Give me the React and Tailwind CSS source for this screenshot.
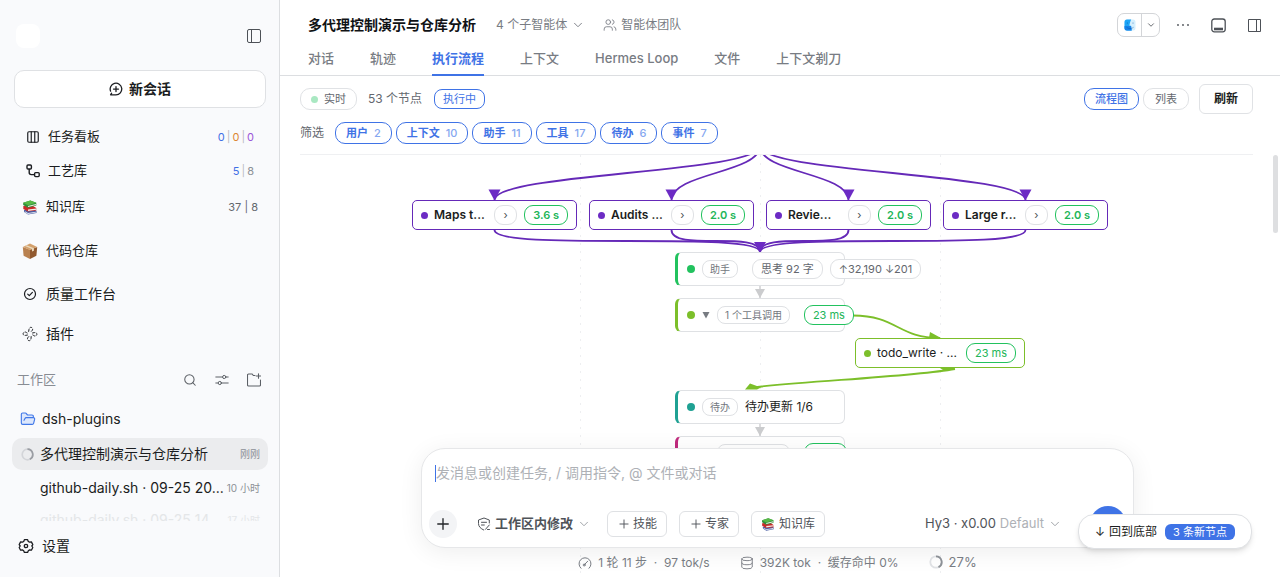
import React from "react";
import { ChevronDown, Search, Users, Database, Columns3, Plus, FolderOpen } from "lucide-react";

function Books({ className }) {
  return (
    <svg className={className} viewBox="0 0 16 16" aria-hidden="true">
      <path d="M2 11l9-1.2 3.5 2.2v2L6 15.6 2.2 13z" fill="#4b5fa5" />
      <path d="M3 12.2l3 1.8 8-1.3v.9L6 14.9l-3-1.7z" fill="#e8e8ee" />
      <path d="M1.3 7l9-.6 4 2.6v2.6l-8.3 1L1.3 10z" fill="#c92a2a" />
      <path d="M6 10.4l8.5-1v1.3L6 11.9z" fill="#f1efe9" />
      <path d="M1.2 3.8L8.3 1.4l6 2.4v2.8L6 8.8 1.2 6z" fill="#2f8f3a" />
      <path d="M1.2 3.8L8.3 1.4l6 2.4L6 6.3z" fill="#58b947" />
      <path d="M6 6.9l8-2v1L6 8.1z" fill="#f3f1ea" />
    </svg>
  );
}

function Box({ className }) {
  return (
    <svg className={className} viewBox="0 0 16 16" aria-hidden="true">
      <path d="M.8 4L8 6.800V16L1.600 12.700z" fill="#b98150" />
      <path d="M15.200 4L8 6.800V16l6.400-3.300z" fill="#91592f" />
      <path d="M.8 4L8 .6 15.200 4 8 7z" fill="#d3a06c" />
      <path d="M4.600 2.200l7.300 3.100v2.500l-1.900.8V6L2.900 3z" fill="#ead9bd" />
    </svg>
  );
}

function NewChatIcon() {
  return (
    <svg className="size-3.5" viewBox="0 0 14 14" fill="none" stroke="currentColor" strokeWidth="1.3" strokeLinecap="round" aria-hidden="true">
      <path d="M1.600 12.800h5.400A5.800 5.800 0 1 0 1.600 9.200M1.600 12.800l1-1.600M7 4.600v5M4.500 7.100h5" />
    </svg>
  );
}

function SidebarIcon() {
  return (
    <svg className="size-3.5" viewBox="0 0 14 14" fill="none" stroke="currentColor" strokeWidth="1" aria-hidden="true">
      <rect x=".5" y=".5" width="13" height="13" rx="1.5" />
      <path d="M4.500 .5v13" />
    </svg>
  );
}

function FlowIcon() {
  return (
    <svg className="size-3.5" viewBox="0 0 14 14" fill="none" stroke="currentColor" strokeWidth="1.4" aria-hidden="true">
      <rect x="1" y="1" width="4.400" height="4" rx="1" />
      <rect x="8.600" y="8.600" width="4.600" height="4" rx="1" />
      <path d="M3.200 5v3.600c0 1.400.6 2 2 2h3.400" />
    </svg>
  );
}

function CheckIcon() {
  return (
    <svg className="size-3.5" viewBox="0 0 14 14" fill="none" stroke="currentColor" strokeWidth="1.2" strokeLinecap="round" strokeLinejoin="round" aria-hidden="true">
      <circle cx="7" cy="7" r="5.500" />
      <path d="M4.700 7.100l1.600 1.600 3.100-3.300" />
    </svg>
  );
}

function PluginIcon() {
  return (
    <svg className="size-4" viewBox="0 0 16 16" fill="none" stroke="currentColor" strokeWidth="1" strokeDasharray="3 1" aria-hidden="true">
      <path d="M6.600 5.800L7 3.300C7.300 1.600 8.800.8 9.900 1.700c1.100.9 1 2.200 0 3.100L8.800 5.900M10.200 7l2.500-.4c1.600-.2 2.600 1 2 2.300-.6 1.200-2.100 1.500-3.200.5L10.200 8.600M9.200 10.200L9 12.700c-.2 1.700-1.600 2.500-2.800 1.600-1.100-.9-1-2.200 0-3.100L7.300 10M5.800 9L3.300 9.400c-1.600.2-2.600-1-2-2.300.6-1.200 2.100-1.500 3.200-.5L5.900 7.400" />
    </svg>
  );
}

function GearIcon() {
  return (
    <svg className="size-4" viewBox="0 0 16 16" fill="none" stroke="currentColor" strokeWidth="1.3" strokeLinejoin="round" aria-hidden="true">
      <path d="M6.400 1.700h3.200l.7 1.700 1.300.8 1.800-.3 1.400 2.700-1 1.400 1 1.500-1.400 2.700-1.800-.3-1.300.8-.7 1.700H6.400l-.7-1.700-1.300-.8-1.800.3-1.400-2.700 1-1.500-1-1.400 1.400-2.700 1.800.3 1.300-.8z" />
      <circle cx="8" cy="8" r="1.700" />
    </svg>
  );
}

function SlidersIcon() {
  return (
    <svg className="size-3.5" viewBox="0 0 14 14" fill="none" stroke="currentColor" strokeWidth="1" strokeLinecap="round" aria-hidden="true">
      <path d="M.8 4h6.700M11 4h2.200M.8 10H3M6.500 10h6.700" />
      <circle cx="9.200" cy="4" r="1.600" />
      <circle cx="4.800" cy="10" r="1.600" />
    </svg>
  );
}

function FolderAddIcon() {
  return (
    <svg className="size-3.5" viewBox="0 0 14 14" fill="none" stroke="currentColor" strokeWidth="1.1" strokeLinecap="round" strokeLinejoin="round" aria-hidden="true">
      <path d="M8 2.500H6.300L5.200 1H1.500a1 1 0 0 0-1 1v10a1 1 0 0 0 1 1h11a1 1 0 0 0 1-1V7M11.500.800v4.400M9.300 3h4.400" />
    </svg>
  );
}

function Ring({ className, base, arc }) {
  return (
    <svg className={className} viewBox="0 0 14 14" fill="none" strokeWidth="1.8" aria-hidden="true">
      <circle cx="7" cy="7" r="5.700" stroke={base} />
      <path d="M7 1.300A5.700 5.700 0 0 1 9.500 12.100" stroke={arc} />
    </svg>
  );
}

function ShieldIcon() {
  return (
    <svg className="size-3.5" viewBox="0 0 14 14" fill="none" stroke="currentColor" strokeWidth="1" strokeLinecap="round" strokeLinejoin="round" aria-hidden="true">
      <path d="M12.300 6V3L7 1 1.500 3v3.500c0 3 2 5 5.200 6.500M4.500 5.300h5M4.500 8h2.800M8.500 12.300l3.800-4.300M10.500 12.500h2" />
    </svg>
  );
}

function GaugeIcon() {
  return (
    <svg className="size-3.5" viewBox="0 0 14 14" fill="none" stroke="currentColor" strokeWidth="1" strokeLinecap="round" aria-hidden="true">
      <path d="M3 12.300a6 6 0 1 1 8 0M6.300 8.800l3.400-3.600" />
      <circle cx="6.200" cy="9" r="1" />
    </svg>
  );
}

function FinderIcon() {
  return (
    <svg className="size-3" viewBox="0 0 12 12" aria-hidden="true">
      <rect x=".5" y=".5" width="11" height="11" rx="2.500" fill="#d5effd" />
      <path d="M3 .5h4.200C6 3 5.500 5 5.500 6.800H7c0 1.700.2 3.200.7 4.700H3A2.500 2.500 0 0 1 .5 9V3A2.500 2.500 0 0 1 3 .5z" fill="#1ba4f6" />
      <path d="M.5 7h5.200l1.500.3.500 4.200H3A2.500 2.500 0 0 1 .5 9z" fill="#1481e8" />
      <path d="M2.600 8.300c2 1.700 5 1.700 7 0" fill="none" stroke="#0d4f9e" strokeWidth=".4" />
      <path d="M3.400 3.500v1.200M9 3.500v1.200" stroke="#0d4f9e" strokeWidth=".5" />
    </svg>
  );
}

function NavRow({ icon, label, children, className }) {
  return (
    <a href="#" className={"flex items-center " + className}>
      {icon}
      <span className="flex-1">{label}</span>
      {children}
    </a>
  );
}

function Sidebar() {
  return (
    <aside className="flex w-[280px] shrink-0 flex-col bg-[#f9fafc] text-[#1b1d21] shadow-[inset_-1px_0_#dcdee1]">
      <div className="flex items-center justify-between pt-6 pr-[19px] pl-4">
        <div className="size-6 rounded-lg bg-white" />
        <button aria-label="收起侧栏" className="text-[#4d5157]"><SidebarIcon /></button>
      </div>
      <button className="mx-3.5 mt-[22px] flex h-[38px] shrink-0 items-center justify-center gap-1.5 rounded-[10px] border border-[#dfe1e4] bg-white text-sm font-semibold">
        <NewChatIcon />
        新会话
      </button>
      <nav className="flex flex-col pt-3 text-[13px]">
        <NavRow className="h-[34px] gap-2 pr-[26px] pl-[26px]" icon={<Columns3 className="size-3.5" strokeWidth={2} />} label="任务看板">
          <span className="flex gap-0.5 text-[11px] text-[#b9bcc2]">
            <span className="text-[#3f6fe5]">0</span>|<span className="text-[#dd8632]">0</span>|<span className="text-[#9a55d8]">0</span>
          </span>
        </NavRow>
        <NavRow className="h-[34px] gap-2 pr-[26px] pl-[26px]" icon={<FlowIcon />} label="工艺库">
          <span className="flex gap-0.5 text-[11px] text-[#b9bcc2]">
            <span className="text-[#3f6fe5]">5</span>|<span className="text-[#8c9096]">8</span>
          </span>
        </NavRow>
        <NavRow className="mb-1 h-[38px] gap-2 pr-[22px] pl-[22px]" icon={<Books className="size-4" />} label="知识库">
          <span className="text-[11px] text-[#63676e]">37 | 8</span>
        </NavRow>
        <NavRow className="mb-px h-[42px] gap-2 pl-[22px]" icon={<Box className="size-4" />} label="代码仓库" />
        <NavRow className="h-[42px] gap-[9px] pl-[23px] text-sm" icon={<CheckIcon />} label="质量工作台" />
        <NavRow className="h-[38px] gap-2 pl-[22px] text-sm" icon={<PluginIcon />} label="插件" />
      </nav>
      <div className="mt-px flex h-[52px] shrink-0 items-center gap-[18px] pr-[19px] pl-[17px] text-[#5c6066]">
        <h2 className="flex-1 text-[13px] text-[#888c93]">工作区</h2>
        <button aria-label="搜索"><Search className="size-3.5" strokeWidth={1.8} /></button>
        <button aria-label="筛选"><SlidersIcon /></button>
        <button aria-label="新建工作区"><FolderAddIcon /></button>
      </div>
      <div className="flex min-h-0 flex-1 flex-col overflow-hidden px-3 text-sm">
        <a href="#" className="flex h-[26px] shrink-0 items-center gap-1.5 pl-2">
          <FolderOpen className="size-4 text-[#4178e8]" fill="#dce7fc" strokeWidth={1.7} />
          dsh-plugins
        </a>
        <a href="#" className="mt-1.5 flex h-8 shrink-0 items-center gap-1.5 rounded-[10px] bg-[#ebecee] pr-2 pl-[9px]">
          <Ring className="size-[13px]" base="#d3d5d9" arc="#9a9da3" />
          <span className="flex-1">多代理控制演示与仓库分析</span>
          <span className="text-[10px] text-[#8c9096]">刚刚</span>
        </a>
        <a href="#" className="mt-0.5 flex h-8 shrink-0 items-center pr-2 pl-7">
          <span className="flex-1 whitespace-nowrap">github-daily.sh · 09-25 20...</span>
          <span className="text-[10px] whitespace-nowrap text-[#8c9096]">10 小时</span>
        </a>
        <a href="#" className="flex h-8 shrink-0 items-center pr-2 pl-7 text-[#e4e6e8]">
          <span className="flex-1 whitespace-nowrap">github-daily.sh · 09-25 14...</span>
          <span className="text-[10px] whitespace-nowrap">17 小时</span>
        </a>
      </div>
      <a href="#" className="flex h-14 shrink-0 items-center gap-2 pb-1.5 pl-[18px] text-sm">
        <GearIcon />
        设置
      </a>
    </aside>
  );
}

const tabs = ["对话", "轨迹", "执行流程", "上下文", "Hermes Loop", "文件", "上下文剃刀"];

function Header() {
  return (
    <header className="shrink-0 border-b border-[#dcdee1]">
      <div className="flex h-12 items-center pt-0.5 pr-[18px] pl-7 text-xs text-[#787c83]">
        <h1 className="text-sm font-semibold text-[#101215]">多代理控制演示与仓库分析</h1>
        <button className="ml-5 flex items-center gap-1">4 个子智能体<ChevronDown className="size-3.5" strokeWidth={1.6} /></button>
        <button className="ml-[18px] flex items-center gap-1"><Users className="size-3.5" strokeWidth={1.5} />智能体团队</button>
        <div className="ml-auto flex h-6 items-center rounded-[7px] border border-[#d3d5d8] text-[#4d5157]">
          <button aria-label="打开方式" className="flex h-full w-6 items-center justify-center border-r border-[#d3d5d8]"><FinderIcon /></button>
          <button aria-label="更多打开方式" className="flex w-[17px] justify-center"><ChevronDown className="size-2.5" strokeWidth={2} /></button>
        </div>
        <button aria-label="更多" className="ml-4 text-[#4d5157]">
          <svg className="size-3.5" viewBox="0 0 14 14" fill="currentColor" aria-hidden="true">
            <circle cx="2" cy="7" r=".9" /><circle cx="7" cy="7" r=".9" /><circle cx="12" cy="7" r=".9" />
          </svg>
        </button>
        <button aria-label="底部面板" className="ml-[21px] text-[#4d5157]">
          <svg className="size-[15px]" viewBox="0 0 15 15" fill="none" stroke="currentColor" strokeWidth="1.3" aria-hidden="true">
            <rect x=".8" y="1" width="13.400" height="12.800" rx="2.500" />
            <path d="M3 11h9" strokeWidth="2.600" />
          </svg>
        </button>
        <button aria-label="右侧面板" className="ml-[21px] text-[#4d5157]">
          <svg className="size-[15px]" viewBox="0 0 15 15" fill="none" stroke="currentColor" aria-hidden="true">
            <path d="M1.500 1.500h12v12h-12zM9.500 1.500v12" />
          </svg>
        </button>
      </div>
      <nav className="flex h-[27px] gap-9 pl-7 text-[13px] text-[#787c83]">
        {tabs.map((t) => (
          <a key={t} href="#" className={"pt-px " + (t === "执行流程" ? "-mb-px border-b-2 border-[#3f73e6] font-semibold text-[#3f73e6]" : "font-medium")}>{t}</a>
        ))}
      </nav>
    </header>
  );
}

const filters = [["用户", 2], ["上下文", 10], ["助手", 11], ["工具", 17], ["待办", 6], ["事件", 7]];

function Toolbar() {
  return (
    <div className="mr-[27px] ml-5 shrink-0 border-b border-[#eff0f2] pt-2 pb-2.5 text-[#63676e]">
      <div className="flex h-[30px] items-center">
        <button className="flex h-[22px] items-center gap-1.5 rounded-[10px] border border-[#e0e2e5] px-2.5 text-[11px]">
          <span className="size-[7px] rounded-full bg-[#a9e8c2]" />实时
        </button>
        <span className="ml-[11px] text-xs">53 个节点</span>
        <span className="ml-3 flex h-5 items-center rounded-lg border border-[#3f73e6] px-2 text-[11px] text-[#3f73e6]">执行中</span>
        <button className="ml-auto h-[22px] rounded-[10px] border border-[#3f73e6] px-2.5 text-[11px] font-medium text-[#3f73e6]">流程图</button>
        <button className="ml-1 h-[22px] rounded-[10px] border border-[#e0e2e5] px-[11px] text-[11px]">列表</button>
        <button className="ml-2.5 h-[30px] rounded-md border border-[#e0e2e5] px-3.5 text-xs font-semibold text-[#1b1d21]">刷新</button>
      </div>
      <div className="mt-2 flex h-[22px] items-center gap-1 text-xs">
        <span className="mr-[7px]">筛选</span>
        {filters.map(([name, n]) => (
          <button key={name} className="flex h-[22px] items-center gap-1.5 rounded-[10px] border border-[#3f73e6] px-2.5 text-[11px] font-semibold text-[#3f73e6]">
            {name}<span className="text-[11px] font-medium text-[#85a7f0]">{n}</span>
          </button>
        ))}
      </div>
    </div>
  );
}

function Pill({ children }) {
  return <span className="flex h-5 shrink-0 items-center rounded-[9px] border border-[#dfe1e4] bg-white px-2 whitespace-nowrap text-[#63676e]">{children}</span>;
}

function Tag({ children }) {
  return <span className="flex h-[18px] shrink-0 items-center rounded-lg border border-[#dfe1e4] px-[7px] text-[10px] whitespace-nowrap text-[#73777e]">{children}</span>;
}

function Time({ children, bold }) {
  return <span className={"flex h-5 shrink-0 items-center rounded-[9px] border border-[#22c25e] bg-white px-2 whitespace-nowrap text-[#22b558] " + (bold ? "font-semibold" : "")}>{children}</span>;
}

function AgentNode({ place, label, time }) {
  return (
    <div className={"absolute top-[45px] flex h-[30px] w-[165px] items-center rounded-[5px] border border-[#6529b8] bg-white px-2 text-[11px] " + place}>
      <span className="size-[7px] shrink-0 rounded-full bg-[#6c2bc4]" />
      <span className="ml-1.5 flex-1 text-xs font-semibold whitespace-nowrap text-[#1b1d21]">{label}</span>
      <button aria-label="展开" className="mr-[7px] flex h-5 w-[23px] items-center justify-center rounded-[9px] border border-[#dfe1e4] text-[#4d5157]">›</button>
      <Time bold>{time}</Time>
    </div>
  );
}

function StepNode({ place, dot, children }) {
  return (
    <div className={"absolute left-[375px] flex h-[34px] w-[170px] items-center gap-[7px] rounded-md border border-l-3 border-[#dfe1e4] bg-white pl-[9px] text-[11px] " + place}>
      <span className={"size-2 shrink-0 rounded-full " + dot} />
      {children}
    </div>
  );
}

function Collapse() {
  return (
    <button aria-label="折叠" className="w-2">
      <svg className="size-2" viewBox="0 0 8 8" aria-hidden="true"><path d="M.5 1h7L4 7.500z" fill="#777b81" /></svg>
    </button>
  );
}

function Edges() {
  const xs = [194.5, 371.5, 548.5, 725.5];
  return (
    <svg className="absolute inset-0 h-[422px] w-[920px]" fill="none" aria-hidden="true">
      <g stroke="#eeeff1" strokeWidth="1" strokeDasharray="2 6">
        <path d="M280.500 0v422M460.500 0v422M640.500 0v422" />
      </g>
      <g stroke="#6529b8" strokeWidth="1.800">
        {xs.map((x) => (
          <path key={x} d={`M460 -9C460 18 ${x} 18 ${x} 45M${x} 75C${x} 97 460 75 460 97`} />
        ))}
      </g>
      <g fill="#6c2bc4">
        {xs.map((x) => (
          <path key={x} d={`M${x - 6} 34.500h12l-6 11z`} />
        ))}
        <path d="M454 87h12l-6 10z" />
      </g>
      <g stroke="#cfd0d2" strokeWidth="1.500">
        <path d="M460 131v12M460 269v12" />
      </g>
      <path d="M455 134h10l-5 9zM455 272h10l-5 9z" fill="#cbccce" />
      <g stroke="#7cbf2a" strokeWidth="1.800">
        <path d="M553 160.500C597 160.500 598 183 640 183" />
        <path d="M655 214C610 222 505 226 448 233" />
      </g>
      <path d="M630 177l11 6h-12zM640 213h15l-2 2h-10zM450 228.500l11 4-4 2h-12z" fill="#7cbf2a" />
    </svg>
  );
}

function Canvas() {
  return (
    <div className="relative min-h-0 flex-1 overflow-hidden">
      <div className="absolute inset-y-0 left-5 w-[920px]">
        <Edges />
        <AgentNode place="left-28" label="Maps t..." time="3.6 s" />
        <AgentNode place="left-[289px]" label="Audits ..." time="2.0 s" />
        <AgentNode place="left-[466px]" label="Revie..." time="2.0 s" />
        <AgentNode place="left-[643px]" label="Large r..." time="2.0 s" />
        <StepNode place="top-[97px] border-l-[#22c25e]" dot="bg-[#22c25e]">
          <Tag>助手</Tag><span /><Pill>思考 92 字</Pill><Pill>↑32,190 ↓201</Pill>
        </StepNode>
        <StepNode place="top-[143px] border-l-[#7cbf2a]" dot="bg-[#7cbf2a]">
          <Collapse /><Tag>1 个工具调用</Tag><span /><Time>23 ms</Time>
        </StepNode>
        <div className="absolute top-[183px] left-[555px] flex h-[30px] w-[170px] items-center gap-1.5 rounded-[5px] border border-[#7cbf2a] bg-white px-2 text-[11px]">
          <span className="size-[7px] shrink-0 rounded-full bg-[#7cbf2a]" />
          <span className="flex-1 text-xs whitespace-nowrap text-[#1b1d21]">todo_write · ...</span>
          <Time>23 ms</Time>
        </div>
        <StepNode place="top-[235px] border-l-[#1fa193]" dot="bg-[#1fa193]">
          <Tag>待办</Tag><span className="text-xs text-[#1b1d21]">待办更新 1/6</span>
        </StepNode>
        <StepNode place="top-[281px] border-l-[#c02a7d]" dot="bg-[#c02a7d]">
          <Collapse /><Tag>1 个工具调用</Tag><span /><Time>5 ms</Time>
        </StepNode>
      </div>
      <div className="absolute top-0 right-0.5 h-[78px] w-[5px] rounded-full bg-[#dedfe1]" />
    </div>
  );
}

function Composer() {
  return (
    <div className="absolute inset-x-0 bottom-0 flex flex-col items-center pr-[26px] pl-[21px]">
      <div className="w-full max-w-[713px] rounded-3xl border border-[#e6e7e9] bg-white px-[7px] pt-3 pb-[9px] shadow-[0_4px_24px_rgba(0,0,0,0.07)]">
        <div className="flex h-6 items-center pl-1.5">
          <span className="h-[17px] w-px bg-[#3f73e6]" />
          <input aria-label="消息" placeholder="发消息或创建任务, / 调用指令, @ 文件或对话" className="flex-1 text-sm outline-none placeholder:text-[#aeb1b6]" />
        </div>
        <div className="mt-[25px] flex h-7 items-center text-xs text-[#4f5359]">
          <button aria-label="添加" className="flex size-7 items-center justify-center rounded-full bg-[#f3f4f6] text-[#24262a]"><Plus className="size-[18px]" strokeWidth={1.8} /></button>
          <button className="ml-5 flex items-center gap-1 text-[13px] font-semibold"><ShieldIcon />工作区内修改<ChevronDown className="size-3.5 text-[#9a9da3]" strokeWidth={1.6} /></button>
          <button className="ml-4 flex h-[26px] items-center gap-0.5 rounded-md border border-[#dfe1e4] px-[9px]"><Plus className="size-3.5" strokeWidth={1.6} />技能</button>
          <button className="ml-3 flex h-[26px] items-center gap-0.5 rounded-md border border-[#dfe1e4] px-[9px]"><Plus className="size-3.5" strokeWidth={1.6} />专家</button>
          <button className="ml-3 flex h-[26px] items-center gap-1 rounded-md border border-[#dfe1e4] px-[9px]"><Books className="size-3.5" />知识库</button>
          <button className="ml-auto flex items-center gap-1 text-[13px] whitespace-nowrap">Hy3 · x0.00 <span className="text-[#aeb1b6]">Default</span><ChevronDown className="size-3.5 text-[#9a9da3]" strokeWidth={1.6} /></button>
          <button aria-label="发送" className="ml-7 size-9 shrink-0 rounded-full bg-[#3f73e6]" />
        </div>
      </div>
      <div className="flex h-[29px] items-center gap-[30px] text-xs text-[#787c83]">
        <span className="flex items-center gap-1.5"><GaugeIcon /><span>1 轮 11 步 &nbsp;·&nbsp; 97 tok/s</span></span>
        <span className="flex items-center gap-1.5"><Database className="size-3.5" strokeWidth={1.6} /><span>392K tok &nbsp;·&nbsp; 缓存命中 0%</span></span>
        <span className="flex items-center gap-1.5 text-[13px]"><Ring className="size-3.5" base="#dfe1e4" arc="#8c9096" />27%</span>
      </div>
    </div>
  );
}

export default function App() {
  return (
    <div className="flex h-screen overflow-hidden bg-white font-['Inter','Noto_Sans_CJK_SC',sans-serif]">
      <Sidebar />
      <main className="relative flex min-w-0 flex-1 flex-col">
        <Header />
        <Toolbar />
        <Canvas />
        <Composer />
        <button className="absolute right-7 bottom-7 flex h-[35px] items-center gap-2 rounded-2xl border border-[#dfe1e4] bg-white px-4 text-xs text-[#1b1d21] shadow-md">
          <span className="flex gap-1"><span>↓</span>回到底部</span>
          <span className="rounded-md bg-[#3f73e6] px-2 text-[11px] leading-4 text-white">3 条新节点</span>
        </button>
      </main>
    </div>
  );
}
